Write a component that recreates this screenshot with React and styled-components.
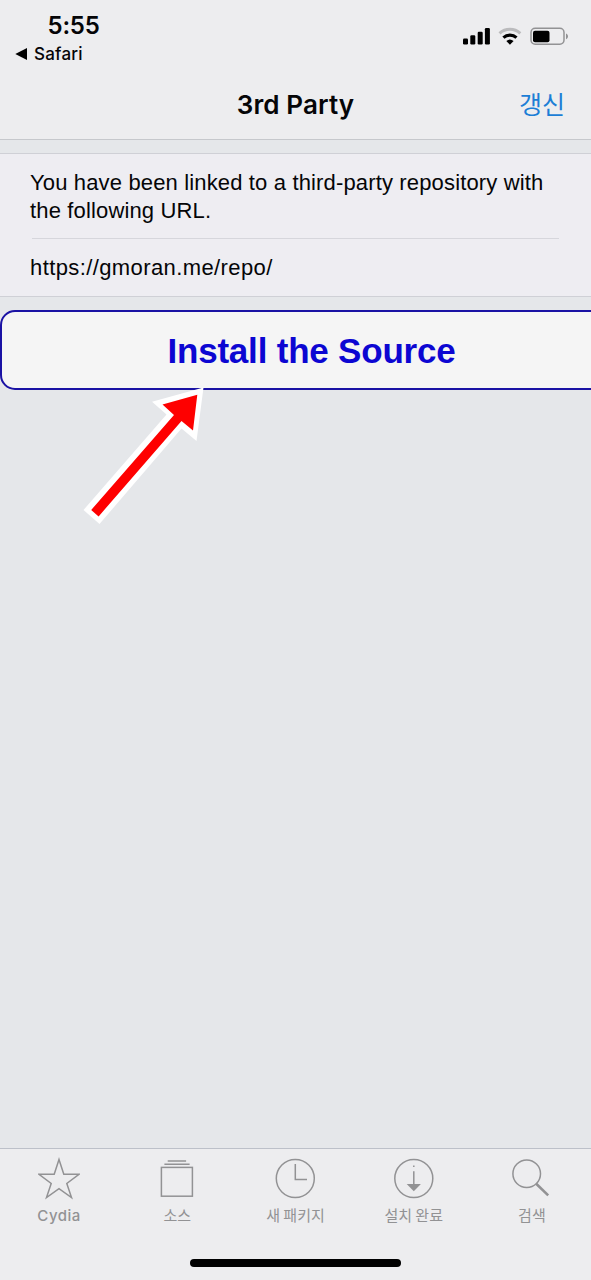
/* eslint-disable react/prop-types */
import React from 'react';
import styled, { createGlobalStyle } from 'styled-components';

const GlobalStyle = createGlobalStyle`
  * {
    box-sizing: border-box;
  }
  body {
    margin: 0;
    background-color: #e5e7ea;
  }
`;

const Screen = styled.div`
  position: relative;
  display: flex;
  flex-direction: column;
  width: 591px;
  height: 1280px;
  overflow: hidden;
  background-color: #e5e7ea;
  color: #050507;
  font-family: Inter, "Noto Sans CJK KR", sans-serif;
`;

const Header = styled.header`
  flex: none;
  height: 140px;
  background-color: #ededef;
  border-bottom: 1px solid #c6c8cc;
`;

const StatusBar = styled.div`
  display: flex;
  justify-content: space-between;
  height: 70px;
  padding: 11px 22px 0 15px;
`;

const Clock = styled.div`
  padding-left: 32.5px;
  font-size: 24px;
  line-height: 30px;
  font-weight: 600;
  letter-spacing: -0.2px;
`;

const BackLink = styled.div`
  display: flex;
  align-items: center;
  gap: 7px;
  margin-top: 3px;
  font-size: 17px;
  line-height: 20px;
  font-weight: 500;
  letter-spacing: 0.2px;
`;

const StatusIcons = styled.div`
  display: flex;
  align-items: flex-start;
  gap: 8px;
  padding-top: 16px;
`;

const NavBar = styled.div`
  display: grid;
  grid-template-columns: 1fr auto 1fr;
  align-items: center;
  height: 69px;
  padding: 0 26px;
`;

const Title = styled.h1`
  grid-column: 2;
  margin: 0;
  font-size: 26px;
  line-height: 30px;
  font-weight: 600;
  letter-spacing: 0.1px;
`;

const Refresh = styled.span`
  justify-self: end;
  padding-bottom: 4px;
  color: #1c7ed6;
  font-family: "Noto Sans CJK KR", sans-serif;
  font-size: 25px;
  line-height: 30px;
`;

const Content = styled.main`
  flex: 1;
  padding-top: 13px;
`;

const Panel = styled.section`
  height: 144px;
  padding: 15px 30px 0;
  background-color: #eeedf2;
  border-top: 1px solid #cfd0d6;
  border-bottom: 1px solid #cfd0d6;
  font-family: "Liberation Sans", sans-serif;
  font-size: 22px;
  line-height: 28px;
`;

const Message = styled.p`
  margin: 0 -10px 0 0;
  letter-spacing: ${(props) => props.$spacing || '0'};
`;

const Divider = styled.hr`
  height: 1px;
  margin: 13px 2px 15px;
  border: 0;
  background-color: #d6d6dc;
`;

const InstallButton = styled.button`
  display: block;
  width: 623px;
  height: 80px;
  margin: 13px 0 0;
  padding: 2px 0 0;
  border: 2px solid #1a12a4;
  border-radius: 15px;
  background-color: #f5f5f5;
  color: #0c06d2;
  font-family: "Liberation Sans", sans-serif;
  font-size: 35px;
  font-weight: 700;
  letter-spacing: -0.2px;
`;

const Pointer = styled.svg`
  position: absolute;
  left: 80px;
  top: 384px;
`;

const TabBar = styled.nav`
  display: grid;
  grid-template-columns: repeat(5, 1fr);
  flex: none;
  height: 102px;
  padding-top: 8px;
  background-color: #ededef;
  border-top: 1px solid #bcc0c9;
`;

const Tab = styled.div`
  display: flex;
  flex-direction: column;
  align-items: center;
  color: #929294;
`;

const TabLabel = styled.span`
  margin-top: ${(props) => (props.$latin ? 5 : 4)}px;
  font-family: ${(props) => (props.$latin ? 'Inter' : '"Noto Sans CJK KR"')}, sans-serif;
  font-size: 15px;
  line-height: 20px;
  font-weight: ${(props) => (props.$latin ? 500 : 400)};
  letter-spacing: ${(props) => props.$spacing || '0'};
`;

const HomeRow = styled.footer`
  display: flex;
  flex: none;
  justify-content: center;
  height: 30px;
  padding-top: 9px;
  background-color: #ededef;
`;

const HomeIndicator = styled.div`
  width: 211px;
  height: 8px;
  border-radius: 4px;
  background-color: #000;
`;

const BackTriangle = () => (
  <svg width="12" height="12" viewBox="0 0 12 12">
    <path d="M0.3 6 12 0v12z" fill="#000" />
  </svg>
);

const SignalIcon = () => (
  <svg width="28" height="18" viewBox="0 0 28 18">
    <rect x="1" y="11.5" width="5" height="6" rx="1.2" />
    <rect x="8.3" y="8.2" width="5" height="9.3" rx="1.2" />
    <rect x="15.7" y="4.8" width="5" height="12.7" rx="1.2" />
    <rect x="22.9" y="1" width="5" height="16.5" rx="1.2" />
  </svg>
);

const WifiIcon = () => (
  <svg width="24" height="18" viewBox="0 0 24 18" fill="none">
    <path d="M1.5 6.3a15.5 15.5 0 0 1 20.8 0" stroke="#bbbbbd" strokeWidth="3" />
    <path d="M5.4 10.6a9.8 9.8 0 0 1 13.1 0" stroke="#000" strokeWidth="3.2" />
    <path d="M8.3 14a5.5 5.5 0 0 1 7.3 0l-3.65 3.7z" fill="#000" />
  </svg>
);

const BatteryIcon = () => (
  <svg width="39" height="19" viewBox="0 0 39 19">
    <rect x="1" y="1.3" width="33" height="16" rx="4.2" fill="none" stroke="#929294" strokeWidth="1.5" />
    <rect x="3" y="3.7" width="16.5" height="11.5" rx="2" />
    <path d="M36 6.4c1.3.5 2 1.6 2 2.9s-.7 2.4-2 2.9z" fill="#929294" />
  </svg>
);

const icons = {
  star: <path d="M21 2.5 25.8 17.3H41L28.8 26.5 33.5 40.5 21 31.6 8.5 40.5 13.2 26.5 1 17.3H16.2z" />,
  sources: (
    <>
      <path d="M11.7 4h18.4M8.4 7.3h25.2" />
      <rect x="5.4" y="10.4" width="31" height="28.8" />
    </>
  ),
  clock: (
    <>
      <circle cx="21.3" cy="21.5" r="19" />
      <path d="M21.3 7v15.5H33" />
    </>
  ),
  download: (
    <>
      <circle cx="20.8" cy="21.5" r="19" />
      <path d="M20.8 8.5v1.4M20.8 14.2V28" />
      <path d="M13.7 27h14.2l-7.1 7.2z" fill="currentColor" stroke="none" />
    </>
  ),
  search: (
    <>
      <circle cx="15.7" cy="16.8" r="13.8" />
      <path d="M25.2 26.8 37.2 38.4" strokeWidth="2.6" />
    </>
  ),
};

const tabs = [
  { label: 'Cydia', icon: 'star', latin: true, spacing: '0.5px' },
  { label: '소스', icon: 'sources' },
  { label: '새 패키지', icon: 'clock' },
  { label: '설치 완료', icon: 'download' },
  { label: '검색', icon: 'search' },
];

const TabIcon = ({ name }) => (
  <svg width="42" height="44" viewBox="0 0 42 44" fill="none" stroke="currentColor" strokeWidth="1.5">
    {icons[name]}
  </svg>
);

const App = () => (
  <>
    <GlobalStyle />
    <Screen>
      <Header>
        <StatusBar>
          <div>
            <Clock>5:55</Clock>
            <BackLink>
              <BackTriangle />
              Safari
            </BackLink>
          </div>
          <StatusIcons>
            <SignalIcon />
            <WifiIcon />
            <BatteryIcon />
          </StatusIcons>
        </StatusBar>
        <NavBar>
          <Title>3rd Party</Title>
          <Refresh>갱신</Refresh>
        </NavBar>
      </Header>
      <Content>
        <Panel>
          <Message $spacing="0.15px">
            You have been linked to a third-party repository with
            <br />
            the following URL.
          </Message>
          <Divider />
          <Message $spacing="0.4px">https://gmoran.me/repo/</Message>
        </Panel>
        <InstallButton type="button">Install the Source</InstallButton>
      </Content>
      <TabBar>
        {tabs.map((tab) => (
          <Tab key={tab.icon}>
            <TabIcon name={tab.icon} />
            <TabLabel $latin={tab.latin} $spacing={tab.spacing}>{tab.label}</TabLabel>
          </Tab>
        ))}
      </TabBar>
      <HomeRow>
        <HomeIndicator />
      </HomeRow>
      <Pointer width="128" height="144" viewBox="80 384 128 144">
        <path d="M203.5 387.5 152 401.8 166.5 414.5 83.5 510 99.5 524 181.5 428.5 196.5 441z" fill="#fff" />
        <path d="M197.3 394.8 162.5 404.5 174 415 91.2 510 98.6 516.4 181.5 421 193 430.5z" fill="#fe0000" />
      </Pointer>
    </Screen>
  </>
);

export default App;
